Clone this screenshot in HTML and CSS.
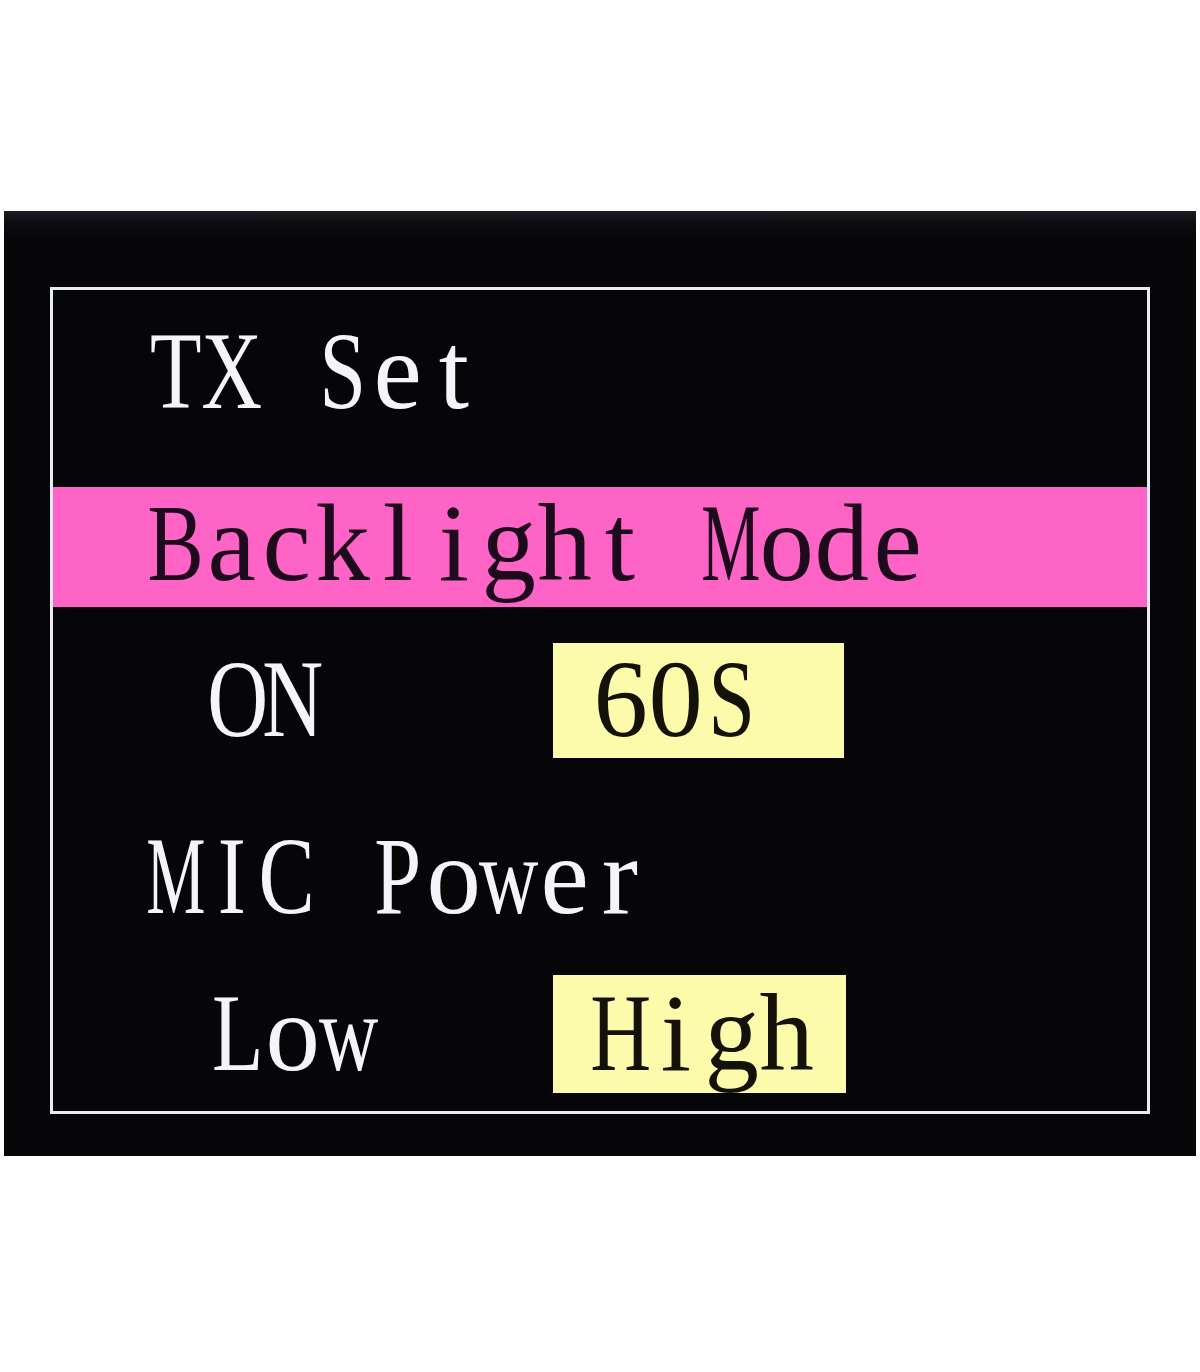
FILE: index.html
```html
<!DOCTYPE html>
<html lang="en">
<head>
<meta charset="utf-8">
<title>TX Set</title>
<link rel="stylesheet" href="styles.css">
</head>
<body>

<div class="screen">
  <div class="frame">

    <!-- menu title -->
    <div class="row title"><span class="c u">T</span><span class="c u">X</span><span class="c"> </span><span class="c u">S</span><span class="c">e</span><span class="c">t</span></div>

    <!-- selected item -->
    <div class="row sel"><span class="c u">B</span><span class="c">a</span><span class="c">c</span><span class="c">k</span><span class="c">l</span><span class="c">i</span><span class="c">g</span><span class="c">h</span><span class="c">t</span><span class="c"> </span><span class="c m">M</span><span class="c">o</span><span class="c">d</span><span class="c">e</span></div>

    <div class="row opt">
      <div class="txt"><span class="c"> </span><span class="c u">O</span><span class="c u">N</span></div>
      <div class="val"><span class="c">6</span><span class="c">0</span><span class="c u">S</span></div>
    </div>

    <div class="row head"><span class="c m">M</span><span class="c u">I</span><span class="c u">C</span><span class="c"> </span><span class="c u">P</span><span class="c">o</span><span class="c w">w</span><span class="c">e</span><span class="c">r</span></div>

    <div class="row opt last">
      <div class="txt"><span class="c"> </span><span class="c u">L</span><span class="c">o</span><span class="c w">w</span></div>
      <div class="val"><span class="c u">H</span><span class="c">i</span><span class="c">g</span><span class="c">h</span></div>
    </div>

  </div>
</div>

</body>
</html>
```

FILE: styles.css
```css
body {
	margin: 0;
	background: #ffffff;
}

.screen {
	margin: 211px 4px 0 4px;
	height: 945px;
	overflow: hidden;
	background: linear-gradient(#1d1d25 0, #0c0c12 12px, #060609 30px, #060609 100%);
	font-family: "Liberation Serif", "Times New Roman", serif;
	font-size: 111px;
	line-height: 111px;
	color: #f3f5fb;
}

.frame {
	box-sizing: border-box;
	width: 1100px;
	height: 827px;
	margin: 76px 0 0 46px;
	border: 3px solid #e7ecf5;
}

.row {
	height: 111px;
	padding-left: 95px;
	white-space: pre;
}

/* one character cell of the lcd font */
.c {
	display: inline-flex;
	justify-content: center;
	width: 55.5px;
	transform: scaleX(.98);
}
.c.u {
	transform: scaleX(.76);
}
.c.w {
	transform: scaleX(.74);
}
.c.m {
	transform: scaleX(.6);
}

.title {
	padding-top: 25px;
	margin-bottom: 61px;
}

.sel {
	padding-bottom: 9px;
	background: #fd64c5;
	color: #1d0a1c;
}

.opt {
	display: flex;
	align-items: flex-start;
	height: auto;
	margin-top: 36px;
	padding-left: 101px;
}
.opt .txt {
	height: 111px;
}
.val {
	margin-left: 232.5px;
	padding: 0 85px 4px 39.5px;
	background: #fcfbab;
	color: #141208;
}

.head {
	margin-top: 62px;
}

.opt.last {
	margin-top: 44px;
}
.opt.last .txt {
	padding-top: 2px;
}
.opt.last .val {
	margin-left: 177px;
	padding: 2px 31px 5px 39.5px;
}
```
